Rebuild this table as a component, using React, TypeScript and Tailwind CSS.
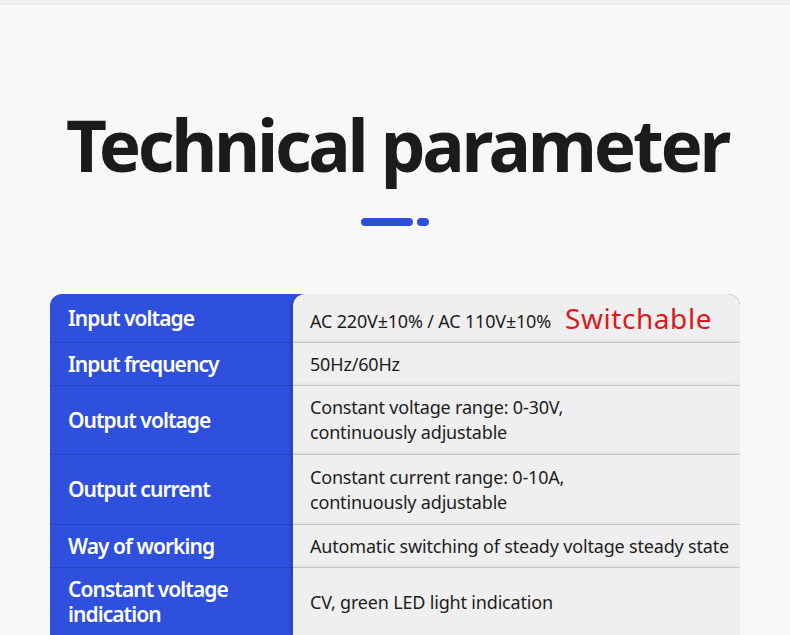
import React from 'react';

const rows = [
  { label: ['Input voltage'], value: ['AC 220V±10% / AC 110V±10%'], extra: 'Switchable', h: 'h-[49px]' },
  { label: ['Input frequency'], value: ['50Hz/60Hz'], h: 'h-[43px]' },
  { label: ['Output voltage'], value: ['Constant voltage range: 0-30V,', 'continuously adjustable'], h: 'h-[69px]' },
  { label: ['Output current'], value: ['Constant current range: 0-10A,', 'continuously adjustable'], h: 'h-[70px]' },
  { label: ['Way of working'], value: ['Automatic switching of steady voltage steady state'], h: 'h-[43px]' },
  { label: ['Constant voltage', 'indication'], value: ['CV, green LED light indication'], h: 'h-[68px]' },
];

const App = () => {
  return (
    <div className="min-h-[635px] w-[790px] overflow-hidden bg-[#f8f8f8] font-['Noto_Sans','Open_Sans',sans-serif]">
      <div className="h-[5px] bg-[#efefef]" />

      <h1 className="pt-[95px] pl-[4px] text-center text-[71px] font-bold leading-[90px] tracking-[-0.046em] text-[#1b1b1d]">
        Technical parameter
      </h1>

      <div className="mt-[28px] flex justify-center gap-[4px]">
        <div className="h-[8px] w-[52px] rounded-full bg-[#2f50dc]" />
        <div className="h-[8px] w-[12px] rounded-full bg-[#2f50dc]" />
      </div>

      <div className="mx-[50px] mt-[68px] overflow-hidden rounded-t-xl bg-[#2f50dc]">
        <div className="grid grid-cols-[243px_1fr]">
          {rows.map((r, i) => (
            <React.Fragment key={i}>
              <div
                className={`flex flex-col justify-center pl-[18px] ${r.h} ${
                  i < rows.length - 1 ? 'border-b border-[#2745c2]' : ''
                }`}
              >
                {r.label.map((t) => (
                  <span
                    key={t}
                    className="text-[21px] font-semibold leading-[25px] tracking-[-0.045em] text-white"
                  >
                    {t}
                  </span>
                ))}
              </div>
              <div
                className={`flex items-center bg-[#efefef] pl-[17px] shadow-[-2px_0_4px_rgba(0,0,0,0.18)] ${r.h} ${
                  i === 0 ? 'rounded-tl-xl pt-[4px]' : ''
                } ${i < rows.length - 1 ? 'border-b border-[#d4d4d4]' : ''}`}
              >
                <div className="flex flex-col">
                  {r.value.map((t) => (
                    <span
                      key={t}
                      className="text-[18px] leading-[25px] tracking-[-0.01em] text-[#1e1e1e]"
                    >
                      {t}
                      {r.extra && (
                        <span className="ml-[14px] align-[-1px] text-[28px] leading-[25px] tracking-[0.02em] text-[#e0171c]">
                          {r.extra}
                        </span>
                      )}
                    </span>
                  ))}
                </div>
              </div>
            </React.Fragment>
          ))}
        </div>
      </div>
    </div>
  );
};

export default App;
